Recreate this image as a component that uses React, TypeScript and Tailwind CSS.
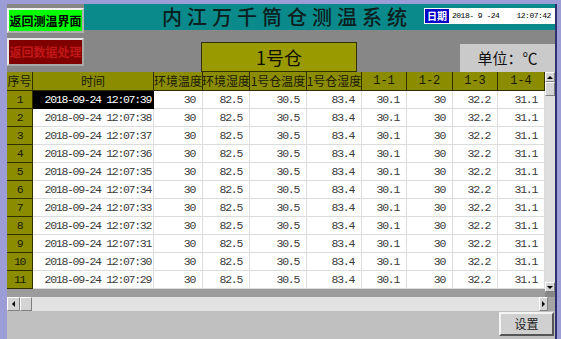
import React from 'react'

const cjk = { fontFamily: '"Noto Sans CJK SC", sans-serif' }
const mono = { fontFamily: '"Liberation Mono", monospace' }

const widths = ['w-[26px]', 'w-[121px]', 'w-[49px]', 'w-[47px]', 'w-[57px]', 'w-[55px]', 'w-[45px]', 'w-[46px]', 'w-[45px]', 'w-[47px]']
const heads = ['序号', '时间', '环境温度', '环境湿度', '1号仓温度', '1号仓湿度', '1-1', '1-2', '1-3', '1-4']
const values = ['30', '82.5', '30.5', '83.4', '30.1', '30', '32.2', '31.1']

const rows = Array.from({ length: 11 }, (_, i) => ({
  n: i + 1,
  time: `2018-09-24 12:07:${String(39 - i).padStart(2, '0')}`,
}))

function HeaderRow() {
  return (
    <div className="flex h-[19px] bg-[#8c8c00] border-b border-[#2e2e00]">
      {heads.map((h, i) => (
        <div
          key={h}
          className={`${widths[i]} shrink-0 border-r border-[#2e2e00] flex items-center justify-center text-[12px] leading-none text-[#1a1a00] whitespace-nowrap overflow-hidden`}
          style={/^\d-\d$/.test(h) ? mono : cjk}
        >
          {h}
        </div>
      ))}
    </div>
  )
}

function DataRow({ n, time }: { n: number; time: string }) {
  const selected = n === 1
  return (
    <div className="flex h-[18px] bg-white text-[11.5px] tracking-[-1.3px] text-[#3a3a3a]" style={mono}>
      <div className="w-[26px] shrink-0 bg-[#8c8c00] border-r border-b border-[#2e2e00] flex items-center justify-center text-[#1a1a00]">
        {n}
      </div>
      <div
        className={`w-[121px] shrink-0 flex items-center justify-end pr-[2px] border-r border-b ${
          selected ? 'bg-black text-white border-black' : 'border-[#dcdcdc]'
        }`}
      >
        {time}
      </div>
      {values.map((v, i) => (
        <div
          key={i}
          className={`${widths[i + 2]} shrink-0 flex items-center justify-end pr-[7px] border-r border-b border-[#dcdcdc]`}
        >
          {v}
        </div>
      ))}
    </div>
  )
}

export default function App() {
  return (
    <div className="w-[561px] h-[339px] overflow-hidden bg-[#9c9cd6] pl-[7px] pt-[4px] flex">
      <div className="w-[550px] h-[335px] flex flex-col bg-[#878787] border-r-2 border-[#303070]">
        {/* top section */}
        <div className="flex h-[68px]">
          <div className="w-[77px] shrink-0 flex flex-col gap-[5px] pt-[4px]">
            <button
              className="h-[25px] bg-[#00ff00] border-2 border-t-[#f0f0f0] border-l-[#f0f0f0] border-r-[#b0b0b0] border-b-[#b0b0b0] text-[12px] font-bold text-black leading-none"
              style={cjk}
            >
              返回测温界面
            </button>
            <button
              className="h-[28px] bg-[#800000] border-2 border-t-[#e8e8e8] border-l-[#e8e8e8] border-r-[#a8a8a8] border-b-[#a8a8a8] text-[12px] font-bold text-[#c01818] leading-none"
              style={cjk}
            >
              返回数据处理
            </button>
          </div>
          <div className="flex-1 flex flex-col">
            <div className="h-[26px] bg-[#0a8a8a] flex items-start">
              <div
                className="flex-1 pl-[78px] pt-[2px] text-[20px] leading-[22px] tracking-[5px] text-[#0a2020] font-medium"
                style={cjk}
              >
                内江万千筒仓测温系统
              </div>
              <div className="mt-[4px] w-[131px] h-[16px] bg-white flex items-center">
                <span
                  className="ml-[1px] h-[14px] px-[2px] bg-[#0000c8] text-white text-[10px] font-bold leading-[14px]"
                  style={cjk}
                >
                  日期
                </span>
                <span className="ml-[3px] text-[8px] tracking-[-0.5px] text-black whitespace-pre" style={mono}>
                  2018- 9 -24    12:07:42
                </span>
              </div>
            </div>
            <div className="flex-1 flex items-end">
              <div
                className="ml-[117px] w-[156px] h-[30px] bg-[#999900] border border-[#303000] flex items-center justify-center text-[18px] text-[#101000]"
                style={cjk}
              >
                1号仓
              </div>
              <div
                className="ml-auto w-[95px] h-[28px] bg-[#cacaca] flex items-center justify-center text-[15px] text-[#111]"
                style={cjk}
              >
                单位：℃
              </div>
            </div>
          </div>
        </div>

        {/* table */}
        <div className="flex h-[225px]">
          <div className="w-[538px] bg-[#9c9c9c]">
            <HeaderRow />
            {rows.map(r => (
              <DataRow key={r.n} n={r.n} time={r.time} />
            ))}
          </div>
          <div className="w-[10px] h-[220px] bg-[#dedede] flex flex-col">
            <div className="h-[10px] bg-[#d4d4d4] border border-t-white border-l-white border-r-[#808080] border-b-[#808080] flex items-center justify-center">
              <span className="w-0 h-0 border-l-[3px] border-r-[3px] border-b-[3px] border-l-transparent border-r-transparent border-b-black" />
            </div>
            <div className="h-[14px] bg-[#d4d4d4] border border-t-white border-l-white border-r-[#808080] border-b-[#808080]" />
            <div className="flex-1" />
            <div className="h-[10px] bg-[#d4d4d4] border border-t-white border-l-white border-r-[#808080] border-b-[#808080] flex items-center justify-center">
              <span className="w-0 h-0 border-l-[3px] border-r-[3px] border-t-[3px] border-l-transparent border-r-transparent border-t-black" />
            </div>
          </div>
        </div>

        {/* horizontal scrollbar */}
        <div className="flex h-[14px] pr-[7px] bg-[#a4a4a4]">
          <div className="flex-1 flex bg-[#e2e2e2]">
            <div className="w-[13px] bg-[#d4d4d4] border border-t-white border-l-white border-r-[#808080] border-b-[#808080] flex items-center justify-center">
              <span className="w-0 h-0 border-t-[3px] border-b-[3px] border-r-[3px] border-t-transparent border-b-transparent border-r-black" />
            </div>
            <div className="w-[12px] bg-[#d4d4d4] border border-t-white border-l-white border-r-[#808080] border-b-[#808080]" />
            <div className="flex-1" />
            <div className="w-[9px] bg-[#d4d4d4] border border-t-white border-l-white border-r-[#808080] border-b-[#808080] flex items-center justify-center">
              <span className="w-0 h-0 border-t-[3px] border-b-[3px] border-l-[3px] border-t-transparent border-b-transparent border-l-black" />
            </div>
          </div>
        </div>

        {/* bottom */}
        <div className="flex-1 bg-[#c0c0c0] flex justify-end items-start pt-[1px] pr-[1px]">
          <button
            className="w-[55px] h-[24px] bg-[#d0d0d0] border-2 border-t-[#f4f4f4] border-l-[#f4f4f4] border-r-[#555] border-b-[#555] text-[12px] text-[#222]"
            style={cjk}
          >
            设置
          </button>
        </div>
      </div>
    </div>
  )
}
